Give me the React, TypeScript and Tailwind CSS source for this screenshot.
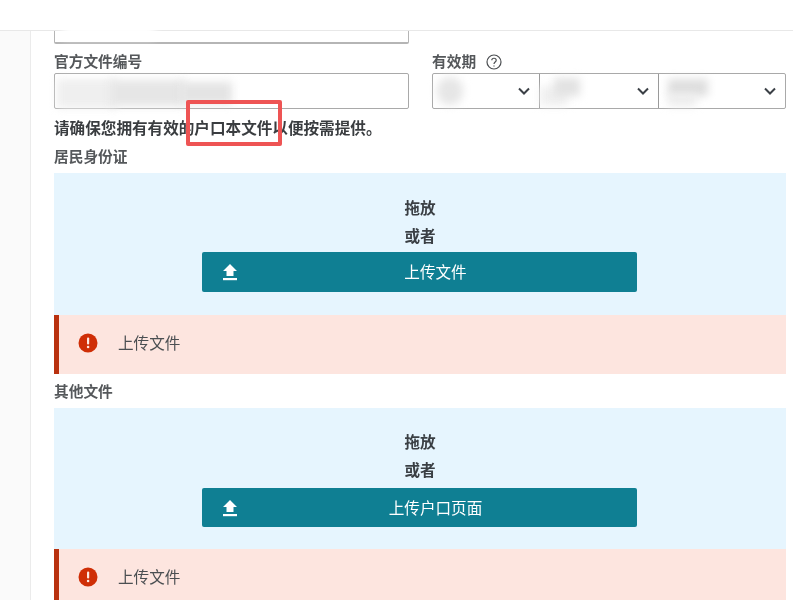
import React from "react";

const font = { fontFamily: '"Noto Sans CJK SC", "Noto Sans", sans-serif' };

function Chevron() {
  return (
    <svg width="14" height="10" viewBox="0 0 14 10" fill="none" stroke="#3b4046" strokeWidth="2" className="shrink-0">
      <path d="M2 2.5 L7 7.5 L12 2.5" />
    </svg>
  );
}

function Blur({ className }: { className: string }) {
  return <div className={"absolute blur-[4px] " + className} />;
}

function Select({ className, children }: { className: string; children: React.ReactNode }) {
  return (
    <div className={"relative flex h-full items-center justify-end " + className}>
      {children}
      <Chevron />
    </div>
  );
}

function UploadIcon() {
  return (
    <svg width="16" height="18" viewBox="0 0 16 18" fill="white">
      <path d="M8 1 L15 8 L11.5 8 L11.5 13 L4.5 13 L4.5 8 L1 8 Z" />
      <rect x="1" y="15" width="14" height="2.2" />
    </svg>
  );
}

function Dropzone({ label, box }: { label: string; box: string }) {
  return (
    <div className={"flex flex-col items-center bg-[#e6f5fe] " + box}>
      <div className="h-[28px] text-[15.6px] leading-[28px] font-semibold text-[#3a3f44]">拖放</div>
      <div className="h-[28px] text-[15.6px] leading-[28px] font-semibold text-[#3a3f44]">或者</div>
      <div className="mr-[1px] flex w-[435px] items-center rounded-[2px] bg-[#0f7f93] pl-[20px] text-white [.first-zone_&]:mt-[3px] [.first-zone_&]:h-[40px] [.second-zone_&]:mt-[5px] [.second-zone_&]:h-[39px]">
        <UploadIcon />
        <span className="flex-1 pr-[4px] text-center text-[15.6px] font-normal">{label}</span>
      </div>
    </div>
  );
}

function ErrorBar({ h }: { h: string }) {
  return (
    <div className={"flex items-start border-l-[5px] border-[#b9310f] bg-[#fde5df] pt-[18px] pl-[19px] " + h}>
      <svg width="20" height="20" viewBox="0 0 20 20" className="shrink-0">
        <circle cx="10" cy="10" r="9.5" fill="#cf2e06" />
        <rect x="9" y="4.5" width="2.2" height="7" rx="1" fill="#fde9e3" />
        <circle cx="10.1" cy="14" r="1.3" fill="#fde9e3" />
      </svg>
      <span className="ml-[20px] text-[15.6px] leading-[19px] text-[#4b4f52]">上传文件</span>
    </div>
  );
}

export default function App() {
  return (
    <div className="relative flex h-[600px] w-[793px] flex-col overflow-hidden bg-white blur-[0.5px]" style={font}>
      <div className="h-[31px] shrink-0 border-b border-[#e8e8e8] bg-white" />
      <div className="flex min-h-0 flex-1">
        <div className="w-[31px] shrink-0 border-r border-[#ebebeb] bg-[#fafafa]" />
        <div className="min-w-0 flex-1 pr-[7px] pl-[23px]">
          <div className="relative h-[13px] w-[355px] rounded-b-[2px] border-x border-b-2 border-[#b5b5b5]">
            <Blur className="left-[8px] -top-[9px] h-[16px] w-[92px] bg-white" />
          </div>
          <div className="mt-[6px] flex gap-[23px]">
            <div className="w-[355px]">
              <div className="flex h-[23px] items-center text-[14.7px] font-semibold text-[#55585b]">官方文件编号</div>
              <div className="relative h-[36px] rounded-[2px] border border-[#a9a9a9]">
                <Blur className="left-[2px] top-[5px] h-[29px] w-[60px] bg-[#efefef]" />
                <Blur className="left-[55px] top-[6px] h-[26px] w-[75px] bg-[#e6e6e6]" />
                <Blur className="left-[125px] top-[8px] h-[22px] w-[52px] bg-[#e4e4e4]" />
              </div>
            </div>
            <div className="w-[354px]">
              <div className="flex h-[23px] items-center text-[14.7px] font-semibold text-[#55585b]">
                有效期
                <svg width="16" height="16" viewBox="0 0 16 16" fill="none" stroke="#4a4d50" strokeWidth="1.2" className="ml-[10px]">
                  <circle cx="8" cy="8" r="7" />
                  <path d="M5.8 6.2 C5.8 3.6 10.2 3.6 10.2 6.2 C10.2 8 8 8 8 10" />
                  <path d="M8 11.4 V12.6" />
                </svg>
              </div>
              <div className="flex h-[36px] rounded-[2px] border border-[#a9a9a9]">
                <Select className="w-[107px] border-r border-[#9a9a9a] pr-[8px]">
                  <Blur className="left-[4px] top-[3px] h-[28px] w-[26px] rounded-full bg-[#e6e6e6]" />
                </Select>
                <Select className="w-[119px] border-r border-[#9a9a9a] pr-[8px]">
                  <Blur className="left-[0px] top-[12px] h-[20px] w-[28px] bg-[#f0f0f0]" />
                  <Blur className="left-[14px] top-[4px] h-[18px] w-[26px] bg-[#e2e2e2]" />
                </Select>
                <Select className="flex-1 pr-[8px]">
                  <Blur className="left-[9px] top-[5px] h-[17px] w-[40px] bg-[#dedede]" />
                  <Blur className="left-[9px] top-[20px] h-[12px] w-[28px] bg-[#ececec]" />
                </Select>
              </div>
            </div>
          </div>
          <div className="mt-[8px] h-[20px] text-[15.6px] leading-[20px] font-semibold text-[#3a3d40]">
            请确保您拥有有效的户口本文件以便按需提供。
          </div>
          <div className="mt-[9px] h-[20px] text-[14.7px] leading-[20px] font-semibold text-[#55585b]">居民身份证</div>
          <div className="first-zone mt-[7px]">
            <Dropzone label="上传文件" box="h-[142px] pt-[20px]" />
            <ErrorBar h="h-[59px]" />
          </div>
          <div className="mt-[7px] h-[20px] text-[14.7px] leading-[20px] font-semibold text-[#55585b]">其他文件</div>
          <div className="second-zone mt-[7px]">
            <Dropzone label="上传户口页面" box="h-[141px] pt-[19px]" />
            <ErrorBar h="h-[60px]" />
          </div>
        </div>
      </div>
      <div className="pointer-events-none absolute top-[100px] left-[186px] h-[46px] w-[96px] rounded-[2px] border-[4px] border-[#ee5454]" />
    </div>
  );
}
